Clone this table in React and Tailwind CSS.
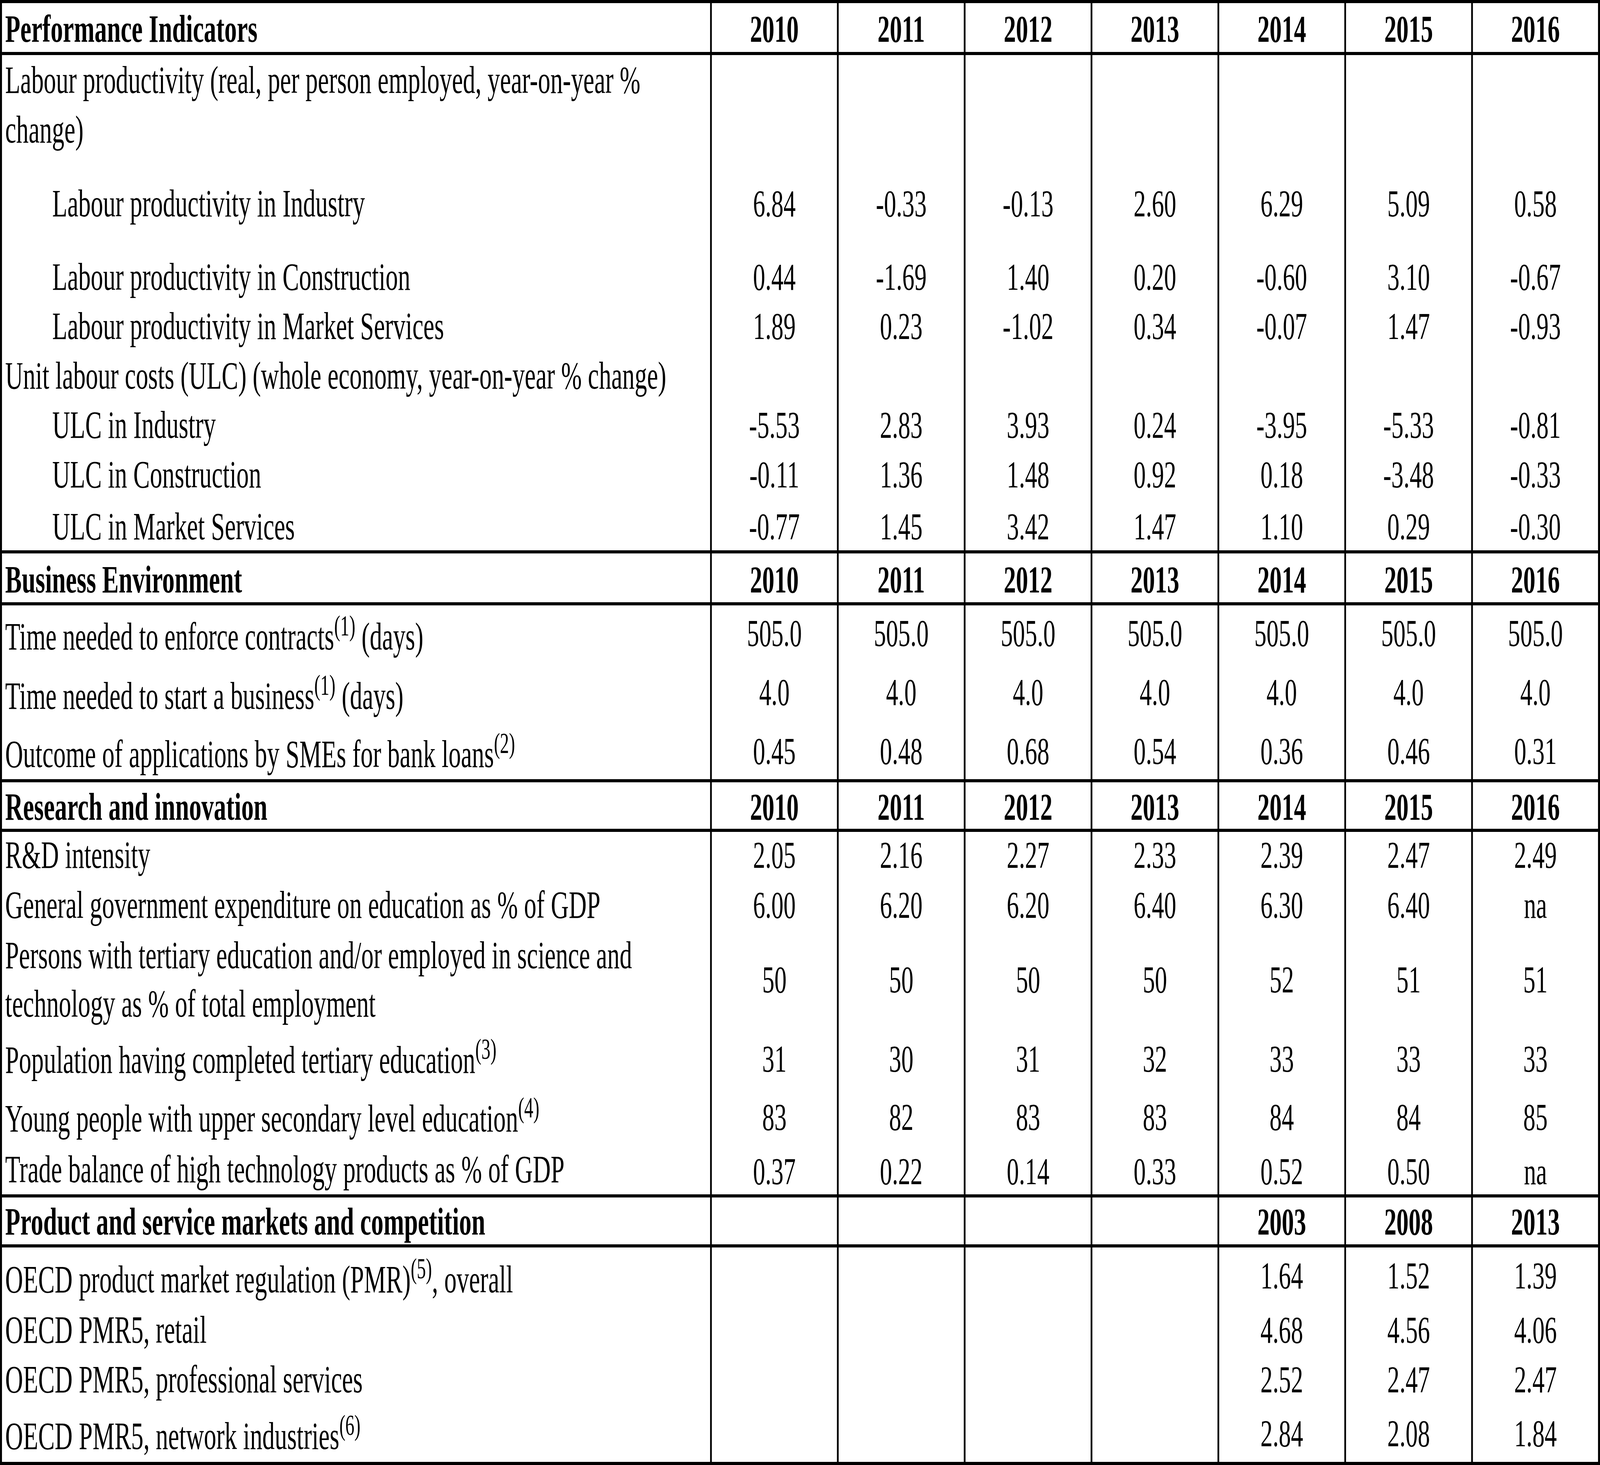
import React, { useEffect, useState } from "react";

const YEARS = ["2010", "2011", "2012", "2013", "2014", "2015", "2016"];
const BLANK4 = ["", "", "", ""];
const TABLE_W = 6433;

// each row: label parts [before, sup, after], h = row height, vpt / lpt = top padding for values / label
const sections = [
  {
    title: "Performance Indicators",
    years: YEARS,
    h: "h-[125px]",
    pt: "pt-[11px]",
    rows: [
      {
        label: ["Labour productivity (real, per person employed, year-on-year %"],
        wrap: "change)",
        lead: "leading-[127px]",
        h: "h-[315px]",
        lpt: "pt-0",
        values: [],
      },
      { label: ["Labour productivity in Industry"], indent: true, h: "h-[188px]", values: ["6.84", "-0.33", "-0.13", "2.60", "6.29", "5.09", "0.58"] },
      { label: ["Labour productivity in Construction"], indent: true, h: "h-[126px]", values: ["0.44", "-1.69", "1.40", "0.20", "-0.60", "3.10", "-0.67"] },
      { label: ["Labour productivity in Market Services"], indent: true, h: "h-[127px]", values: ["1.89", "0.23", "-1.02", "0.34", "-0.07", "1.47", "-0.93"] },
      { label: ["Unit labour costs (ULC) (whole economy, year-on-year % change)"], h: "h-[126px]", values: [] },
      { label: ["ULC in Industry"], indent: true, h: "h-[127px]", values: ["-5.53", "2.83", "3.93", "0.24", "-3.95", "-5.33", "-0.81"] },
      { label: ["ULC in Construction"], indent: true, h: "h-[133px]", values: ["-0.11", "1.36", "1.48", "0.92", "0.18", "-3.48", "-0.33"] },
      { label: ["ULC in Market Services"], indent: true, h: "h-[126px]", values: ["-0.77", "1.45", "3.42", "1.47", "1.10", "0.29", "-0.30"] },
    ],
  },
  {
    title: "Business Environment",
    years: YEARS,
    h: "h-[125px]",
    pt: "pt-[12px]",
    rows: [
      { label: ["Time needed to enforce contracts", "(1)", " (days)"], h: "h-[152px]", vpt: "pt-[16px]", lpt: "pt-[25px]", values: Array(7).fill("505.0") },
      { label: ["Time needed to start a business", "(1)", " (days)"], h: "h-[152px]", vpt: "pt-[15px]", lpt: "pt-[25px]", values: Array(7).fill("4.0") },
      { label: ["Outcome of applications by SMEs for bank loans", "(2)"], h: "h-[141px]", vpt: "pt-[14px]", lpt: "pt-[22px]", values: ["0.45", "0.48", "0.68", "0.54", "0.36", "0.46", "0.31"] },
    ],
  },
  {
    title: "Research and innovation",
    years: YEARS,
    h: "h-[119px]",
    pt: "pt-[8px]",
    rows: [
      { label: ["R&D intensity"], h: "h-[127px]", vpt: "pt-[4px]", lpt: "pt-[4px]", values: ["2.05", "2.16", "2.27", "2.33", "2.39", "2.47", "2.49"] },
      { label: ["General government expenditure on education as % of GDP"], h: "h-[127px]", vpt: "pt-[5px]", lpt: "pt-[5px]", values: ["6.00", "6.20", "6.20", "6.40", "6.30", "6.40", "na"] },
      {
        label: ["Persons with tertiary education and/or employed in science and"],
        wrap: "technology as % of total employment",
        lead: "leading-[124px]",
        h: "h-[260px]",
        vpt: "pt-[69px]",
        lpt: "pt-0",
        values: ["50", "50", "50", "50", "52", "51", "51"],
      },
      { label: ["Population having completed tertiary education", "(3)"], h: "h-[150px]", vpt: "pt-[12px]", lpt: "pt-[15px]", values: ["31", "30", "31", "32", "33", "33", "33"] },
      { label: ["Young people with upper secondary level education", "(4)"], h: "h-[140px]", vpt: "pt-[11px]", lpt: "pt-[15px]", values: ["83", "82", "83", "83", "84", "84", "85"] },
      { label: ["Trade balance of high technology products as % of GDP"], h: "h-[124px]", vpt: "pt-[10px]", lpt: "pt-[5px]", values: ["0.37", "0.22", "0.14", "0.33", "0.52", "0.50", "na"] },
    ],
  },
  {
    title: "Product and service markets and competition",
    years: [...BLANK4, "2003", "2008", "2013"],
    h: "h-[120px]",
    pt: "pt-[7px]",
    rows: [
      { label: ["OECD product market regulation (PMR)", "(5)", ", overall"], h: "h-[146px]", vpt: "pt-[17px]", lpt: "pt-[27px]", values: [...BLANK4, "1.64", "1.52", "1.39"] },
      { label: ["OECD PMR5, retail"], h: "h-[127px]", values: [...BLANK4, "4.68", "4.56", "4.06"] },
      { label: ["OECD PMR5, professional services"], h: "h-[127px]", values: [...BLANK4, "2.52", "2.47", "2.47"] },
      { label: ["OECD PMR5, network industries", "(6)"], h: "h-[149px]", vpt: "pt-[21px]", lpt: "pt-[28px]", values: [...BLANK4, "2.84", "2.08", "1.84"] },
    ],
  },
];

const gridCols = "grid grid-cols-[2847px_repeat(7,510px)]";

function HeaderRow({ section }) {
  return (
    <div className={`${gridCols} ${section.h} font-bold`}>
      <div className={`pl-[13px] ${section.pt} text-[99.5px] leading-[110px] whitespace-nowrap`}>{section.title}</div>
      {section.years.map((y, i) => (
        <div key={i} className={`border-l-[7px] border-black text-center ${section.pt} leading-[110px]`}>
          {y}
        </div>
      ))}
    </div>
  );
}

function DataRow({ row }) {
  const [before, sup, after] = row.label;
  const lpt = row.lpt || "pt-[10px]";
  const vpt = row.vpt || "pt-[10px]";
  const values = row.values.length ? row.values : Array(7).fill("");

  return (
    <div className={`${gridCols} ${row.h}`}>
      <div
        className={`${row.indent ? "pl-[202px]" : "pl-[13px]"} ${lpt} text-[99.5px] ${row.lead || "leading-[110px]"} whitespace-nowrap`}
      >
        {before}
        {sup && <sup className="text-[73px]">{sup}</sup>}
        {after}
        {row.wrap && (
          <>
            <br />
            {row.wrap}
          </>
        )}
      </div>
      {values.map((v, i) => (
        <div key={i} className={`border-l-[7px] border-black text-center ${vpt} leading-[110px]`}>
          {v}
        </div>
      ))}
    </div>
  );
}

// the window may be narrower than the table; squeeze it horizontally to fit
function useFitScale() {
  const get = () => (typeof window === "undefined" ? 1 : Math.min(1, window.innerWidth / TABLE_W));
  const [scale, setScale] = useState(get);
  useEffect(() => {
    const onResize = () => setScale(get());
    window.addEventListener("resize", onResize);
    return () => window.removeEventListener("resize", onResize);
  }, []);
  return scale;
}

export default function App() {
  const scale = useFitScale();

  return (
    <div className="bg-white min-h-screen w-full overflow-hidden">
      <div
        className="w-[6433px] border-8 border-black bg-white text-black text-[98px] origin-top-left"
        style={{
          fontFamily: '"Liberation Serif", "Times New Roman", serif',
          transform: `scaleX(${scale})`,
        }}
      >
        {sections.map((section, si) => (
          <div key={si} className={si > 0 ? "border-t-8 border-black" : ""}>
            <HeaderRow section={section} />
            <div className="border-t-8 border-black">
              {section.rows.map((row, ri) => (
                <DataRow key={ri} row={row} />
              ))}
            </div>
          </div>
        ))}
      </div>
    </div>
  );
}
